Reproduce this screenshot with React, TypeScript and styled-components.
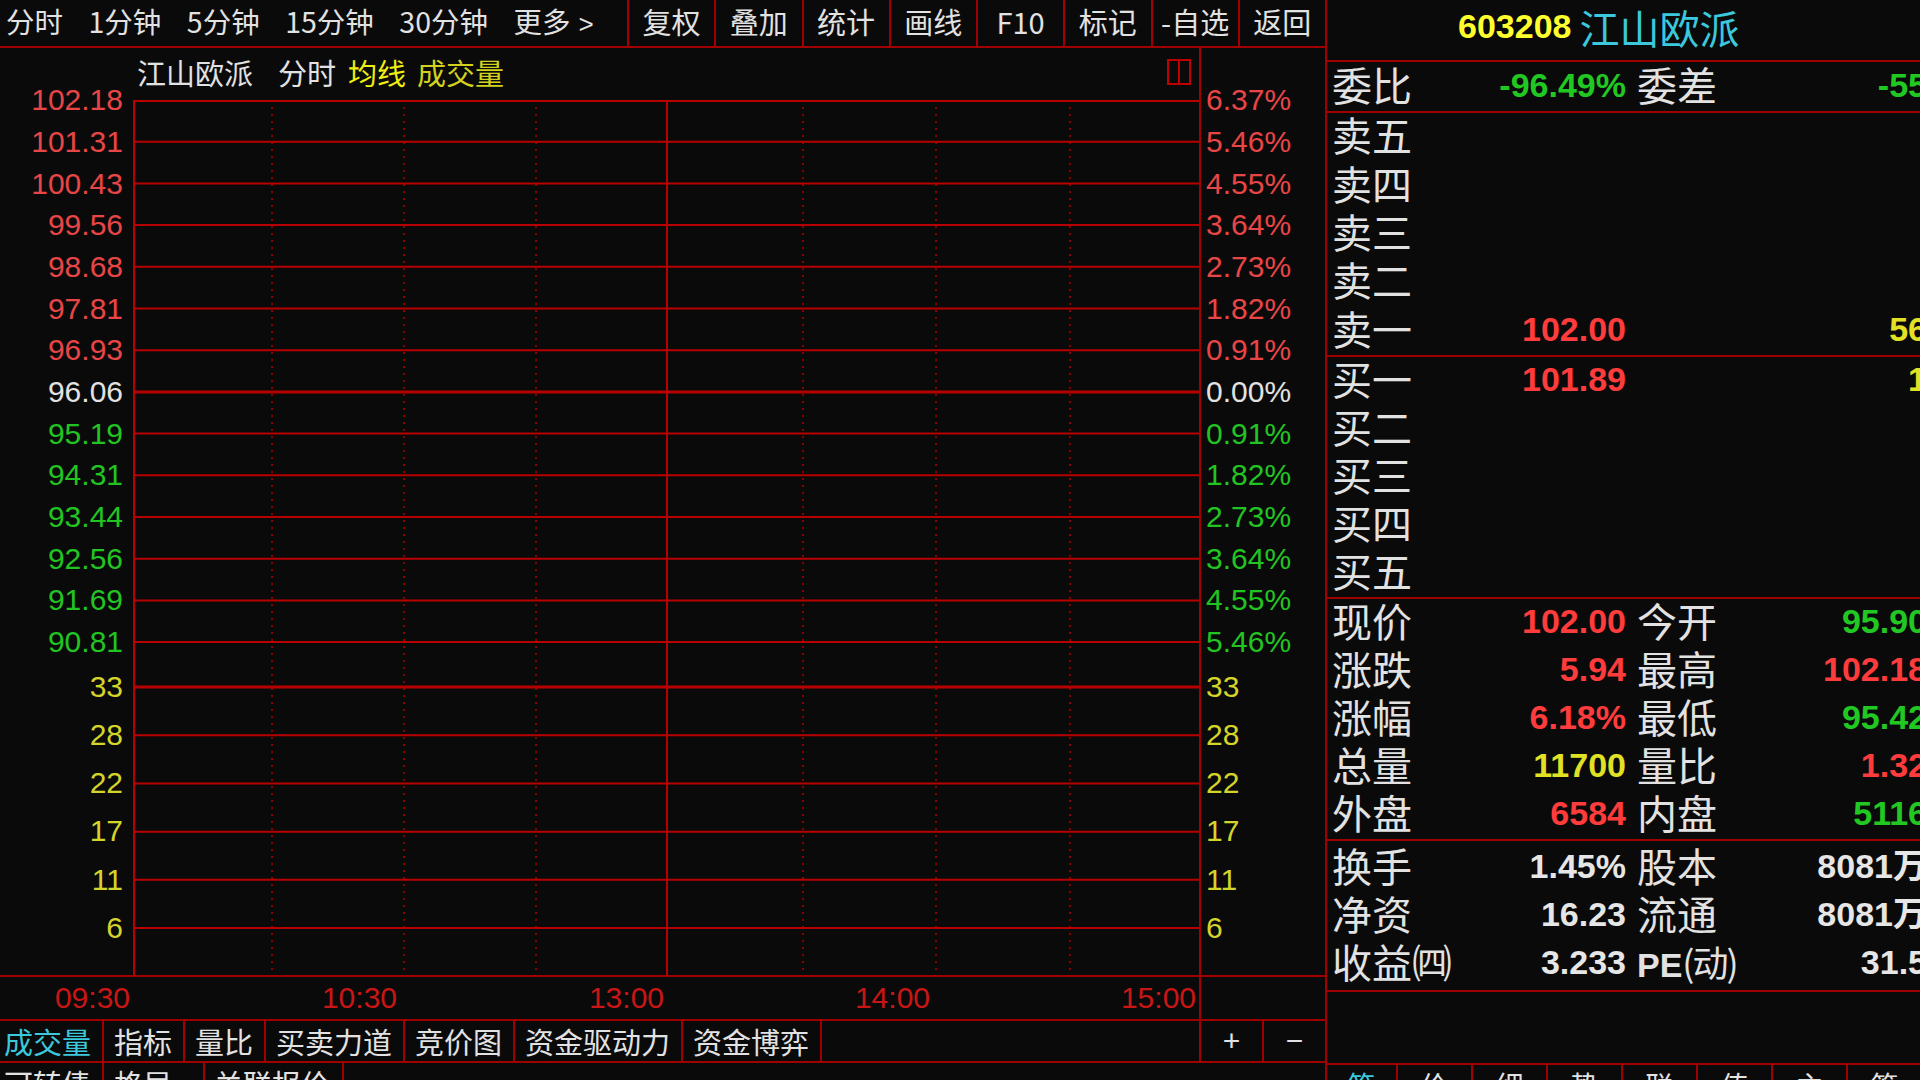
import React from 'react';
import styled, { createGlobalStyle } from 'styled-components';

const BG = '#0a0a0a';
const LINE = '#a00000';
const GRID = '#b80000';
const DOT = '#a80000';
const RED = '#e84646';
const GREEN = '#22c422';
const YELLOW = '#d4d42a';
const CYAN = '#3cc8dc';
const WHITE = '#e2e2e2';
const TIME_RED = '#c81616';

const TONES: Record<string, string> = {
  red: '#ff3c3c',
  green: '#22c822',
  yellow: '#e2e224',
  white: '#e6e6e6',
};

const CJK = `"Noto Sans CJK SC", "Noto Sans", sans-serif`;
const NUM = `"Liberation Sans", "Noto Sans CJK SC", Arial, sans-serif`;

const PRICE_STEP = 41.7;
const VOL_STEP = 48.2;
const VOL_START = PRICE_STEP * 14 - PRICE_STEP / 2 + VOL_STEP / 2;
const PLOT_W = 1066;
const PLOT_H = 875;

const Global = createGlobalStyle`
  html, body { margin: 0; padding: 0; background: ${BG}; overflow: hidden; }
  #root { width: 1920px; height: 1080px; overflow: hidden; }
  * { box-sizing: border-box; }
`;

const Screen = styled.div`
  display: flex;
  width: 1935px;
  height: 1080px;
  background: ${BG};
  color: ${WHITE};
  font-family: ${CJK};
  overflow: hidden;
`;

const LeftPanel = styled.div`
  flex: none;
  width: 1325px;
  display: flex;
  flex-direction: column;
`;

const Toolbar = styled.div`
  display: flex;
  height: 48px;
  flex: none;
  border-bottom: 2px solid ${LINE};
`;

const PeriodGroup = styled.div`
  width: 627px;
  display: flex;
  align-items: center;
  gap: 25.5px;
  padding: 0 0 5px 6px;
  font-size: 28.5px;
  white-space: nowrap;
`;

const Chev = styled.span`
  font-family: "Liberation Sans", sans-serif;
  font-size: 26px;
  margin-left: 8px;
`;

const ToolGroup = styled.div`
  flex: 1;
  display: grid;
  grid-template-columns: repeat(8, 1fr);
`;

const ToolButton = styled.div`
  border-left: 2px solid ${LINE};
  display: flex;
  align-items: center;
  justify-content: center;
  padding-bottom: 5px;
  font-size: 29px;
  white-space: nowrap;
`;

const ChartRegion = styled.div`
  flex: none;
  display: grid;
  grid-template-columns: 133px ${PLOT_W}px 126px;
  grid-template-rows: 52px ${PLOT_H}px;
  border-bottom: 2px solid ${LINE};
`;

const TitleBar = styled.div`
  grid-column: 1 / 3;
  grid-row: 1;
  display: flex;
  align-items: center;
  padding: 0 8px 5px 137px;
  font-size: 29px;
  white-space: nowrap;
`;

const TitleText = styled.span<{ $c: string; $ml: number }>`
  color: ${(p) => p.$c};
  margin-left: ${(p) => p.$ml}px;
`;

const Grow = styled.div`
  flex: 1;
`;

const LeftAxis = styled.div`
  grid-column: 1;
  grid-row: 2;
  display: flex;
  flex-direction: column;
  align-items: flex-end;
  padding-right: 10px;
  margin-top: -${PRICE_STEP / 2}px;
  font-family: ${NUM};
  font-size: 30px;
`;

const RightAxis = styled.div`
  grid-column: 3;
  grid-row: 1 / 3;
  border-left: 2px solid ${LINE};
  display: flex;
  flex-direction: column;
  align-items: flex-start;
  padding: ${52 - PRICE_STEP / 2}px 0 0 5px;
  font-family: ${NUM};
  font-size: 30px;
`;

const AxisLabel = styled.div<{ $vol?: boolean; $c: string }>`
  height: ${(p) => (p.$vol ? VOL_STEP : PRICE_STEP)}px;
  line-height: ${(p) => (p.$vol ? VOL_STEP : PRICE_STEP)}px;
  color: ${(p) => p.$c};
  white-space: nowrap;
`;

const Plot = styled.svg`
  grid-column: 2;
  grid-row: 2;
  display: block;
`;

const TimeRow = styled.div`
  flex: none;
  display: grid;
  grid-template-columns: 133px 267px 267px 266px 266px 126px;
  height: 44px;
  border-bottom: 2px solid ${LINE};
  font-family: ${NUM};
  font-size: 30px;
  color: ${TIME_RED};
`;

const TimeCell = styled.div<{ $edge?: boolean }>`
  text-align: right;
  padding-right: 3px;
  line-height: 42px;
  border-left: ${(p) => (p.$edge ? `2px solid ${LINE}` : 'none')};
`;

const TabRow = styled.div`
  flex: none;
  display: flex;
  height: 42px;
  border-bottom: 2px solid ${LINE};
  font-size: 29px;
  white-space: nowrap;
`;

const Tab = styled.div<{ $active?: boolean; $first?: boolean }>`
  padding: 0 10.5px 0 ${(p) => (p.$first ? 4 : 10.5)}px;
  border-right: 2px solid ${LINE};
  line-height: 40px;
  color: ${(p) => (p.$active ? CYAN : WHITE)};
`;

const ZoomCell = styled.div`
  width: 63px;
  border-left: 2px solid ${LINE};
  display: flex;
  align-items: center;
  justify-content: center;
  font-family: "Liberation Sans", sans-serif;
  font-size: 30px;
  color: ${WHITE};
`;

const SubTabRow = styled.div`
  flex: none;
  display: flex;
  height: 42px;
  font-size: 29px;
  white-space: nowrap;
`;

const SubTab = styled.div<{ $w: number; $pl: number }>`
  width: ${(p) => p.$w}px;
  padding-left: ${(p) => p.$pl}px;
  border-right: 2px solid ${LINE};
  line-height: 40px;
`;

const RightPanel = styled.div`
  flex: none;
  width: 610px;
  border-left: 2px solid ${LINE};
  display: flex;
  flex-direction: column;
`;

const Header = styled.div`
  flex: none;
  height: 62px;
  border-bottom: 2px solid ${LINE};
  display: flex;
  align-items: center;
  gap: 8px;
  padding: 0 0 7px 131px;
  white-space: nowrap;
`;

const Code = styled.span`
  font-family: ${NUM};
  font-weight: 700;
  font-size: 34px;
  color: #ffff2e;
`;

const Name = styled.span`
  font-size: 40px;
  color: ${CYAN};
`;

const Block = styled.div<{ $pt?: number; $h?: number }>`
  flex: none;
  border-bottom: 2px solid ${LINE};
  padding-top: ${(p) => p.$pt ?? 0}px;
  ${(p) => (p.$h ? `height: ${p.$h}px;` : '')}
`;

const Row = styled.div<{ $h: number }>`
  display: grid;
  grid-template-columns: 100px 194px 111px 190px;
  align-items: center;
  height: ${(p) => p.$h}px;
  padding-left: 5px;
`;

const Label = styled.div<{ $second?: boolean }>`
  font-size: 40px;
  line-height: 1;
  color: ${WHITE};
  white-space: nowrap;
  padding: 0 0 6px ${(p) => (p.$second ? 11 : 0)}px;
`;

const LatinBold = styled.span`
  font-family: ${NUM};
  font-weight: 700;
  font-size: 34px;
`;

const Paren = styled.span`
  font-size: 36px;
  letter-spacing: -2px;
`;

const Value = styled.div<{ $tone: string }>`
  font-family: ${NUM};
  font-weight: 700;
  font-size: 34px;
  line-height: 1;
  text-align: right;
  white-space: nowrap;
  padding-bottom: 3px;
  color: ${(p) => TONES[p.$tone]};
`;

const BottomTabs = styled.div`
  flex: none;
  display: flex;
  height: 42px;
  font-size: 28px;
`;

const BottomTab = styled.div<{ $w: number; $active?: boolean }>`
  width: ${(p) => p.$w}px;
  border-right: 2px solid ${LINE};
  text-align: center;
  line-height: 40px;
  color: ${(p) => (p.$active ? CYAN : WHITE)};
`;

const priceLabels: [string, string, string][] = [
  ['102.18', '6.37%', RED],
  ['101.31', '5.46%', RED],
  ['100.43', '4.55%', RED],
  ['99.56', '3.64%', RED],
  ['98.68', '2.73%', RED],
  ['97.81', '1.82%', RED],
  ['96.93', '0.91%', RED],
  ['96.06', '0.00%', WHITE],
  ['95.19', '0.91%', GREEN],
  ['94.31', '1.82%', GREEN],
  ['93.44', '2.73%', GREEN],
  ['92.56', '3.64%', GREEN],
  ['91.69', '4.55%', GREEN],
  ['90.81', '5.46%', GREEN],
];
const volLabels = ['33', '28', '22', '17', '11', '6'];

const vLines = [
  { x: 139, dashed: true },
  { x: 271, dashed: true },
  { x: 403, dashed: true },
  { x: 534, dashed: false },
  { x: 670, dashed: true },
  { x: 803, dashed: true },
  { x: 937, dashed: true },
];

const periods = ['分时', '1分钟', '5分钟', '15分钟', '30分钟'];
const tools = ['复权', '叠加', '统计', '画线', 'F10', '标记', '-自选', '返回'];
const tabs = ['成交量', '指标', '量比', '买卖力道', '竞价图', '资金驱动力', '资金博弈'];
const bottomTabs = ['笔', '价', '细', '势', '联', '值', '主', '筹'];

type Cell = { l: React.ReactNode; v: string; t: string };
type Pair = [Cell, Cell];

const sells = ['卖五', '卖四', '卖三', '卖二', '卖一'];
const buys = ['买一', '买二', '买三', '买四', '买五'];

const stats: Pair[] = [
  [{ l: '现价', v: '102.00', t: 'red' }, { l: '今开', v: '95.90', t: 'green' }],
  [{ l: '涨跌', v: '5.94', t: 'red' }, { l: '最高', v: '102.18', t: 'red' }],
  [{ l: '涨幅', v: '6.18%', t: 'red' }, { l: '最低', v: '95.42', t: 'green' }],
  [{ l: '总量', v: '11700', t: 'yellow' }, { l: '量比', v: '1.32', t: 'red' }],
  [{ l: '外盘', v: '6584', t: 'red' }, { l: '内盘', v: '5116', t: 'green' }],
];

const info: Pair[] = [
  [{ l: '换手', v: '1.45%', t: 'white' }, { l: '股本', v: '8081万', t: 'white' }],
  [{ l: '净资', v: '16.23', t: 'white' }, { l: '流通', v: '8081万', t: 'white' }],
  [
    { l: '收益㈣', v: '3.233', t: 'white' },
    {
      l: (
        <>
          <LatinBold>PE</LatinBold>
          <Paren>(动)</Paren>
        </>
      ),
      v: '31.5',
      t: 'white',
    },
  ],
];

function PairRow({ pair, h }: { pair: Pair; h: number }) {
  return (
    <Row $h={h}>
      <Label>{pair[0].l}</Label>
      <Value $tone={pair[0].t}>{pair[0].v}</Value>
      <Label $second>{pair[1].l}</Label>
      <Value $tone={pair[1].t}>{pair[1].v}</Value>
    </Row>
  );
}

function SplitIcon() {
  return (
    <svg width="24" height="26" viewBox="0 0 24 26">
      <rect x="1" y="1" width="22" height="24" fill="none" stroke="#c00000" strokeWidth="2" />
      <line x1="12" y1="1" x2="12" y2="25" stroke="#c00000" strokeWidth="2" />
    </svg>
  );
}

function ChartGrid() {
  const priceYs = priceLabels.map((_, i) => Math.max(1, i * PRICE_STEP));
  const volYs = volLabels.map((_, j) => VOL_START + j * VOL_STEP);
  return (
    <Plot width={PLOT_W} height={PLOT_H} viewBox={`0 0 ${PLOT_W} ${PLOT_H}`}>
      {vLines.map((l) => (
        <line
          key={l.x}
          x1={l.x}
          x2={l.x}
          y1={0}
          y2={PLOT_H}
          stroke={l.dashed ? DOT : GRID}
          strokeWidth={l.dashed ? 1.6 : 2}
          strokeDasharray={l.dashed ? '2 5' : undefined}
        />
      ))}
      {priceYs.map((y, i) => (
        <line key={`p${i}`} x1={0} x2={PLOT_W} y1={y} y2={y} stroke={GRID} strokeWidth={i === 7 ? 3 : 2} />
      ))}
      {volYs.map((y, j) => (
        <line key={`v${j}`} x1={0} x2={PLOT_W} y1={y} y2={y} stroke={GRID} strokeWidth={j === 0 ? 3 : 2} />
      ))}
      <line x1={1} x2={1} y1={0} y2={PLOT_H} stroke={GRID} strokeWidth={2} />
    </Plot>
  );
}

export default function App() {
  return (
    <>
      <Global />
      <Screen>
        <LeftPanel>
          <Toolbar>
            <PeriodGroup>
              {periods.map((p) => (
                <span key={p}>{p}</span>
              ))}
              <span>
                更多<Chev>&gt;</Chev>
              </span>
            </PeriodGroup>
            <ToolGroup>
              {tools.map((t) => (
                <ToolButton key={t}>{t}</ToolButton>
              ))}
            </ToolGroup>
          </Toolbar>

          <ChartRegion>
            <TitleBar>
              <TitleText $c={WHITE} $ml={0}>江山欧派</TitleText>
              <TitleText $c={WHITE} $ml={25}>分时</TitleText>
              <TitleText $c="#eeee10" $ml={12}>均线</TitleText>
              <TitleText $c="#d2d21e" $ml={11}>成交量</TitleText>
              <Grow />
              <SplitIcon />
            </TitleBar>
            <LeftAxis>
              {priceLabels.map(([p, , c], i) => (
                <AxisLabel key={`l${i}`} $c={c}>{p}</AxisLabel>
              ))}
              {volLabels.map((v) => (
                <AxisLabel key={`lv${v}`} $vol $c={YELLOW}>{v}</AxisLabel>
              ))}
            </LeftAxis>
            <ChartGrid />
            <RightAxis>
              {priceLabels.map(([, pct, c], i) => (
                <AxisLabel key={`r${i}`} $c={c}>{pct}</AxisLabel>
              ))}
              {volLabels.map((v) => (
                <AxisLabel key={`rv${v}`} $vol $c={YELLOW}>{v}</AxisLabel>
              ))}
            </RightAxis>
          </ChartRegion>

          <TimeRow>
            <TimeCell>09:30</TimeCell>
            <TimeCell>10:30</TimeCell>
            <TimeCell>13:00</TimeCell>
            <TimeCell>14:00</TimeCell>
            <TimeCell>15:00</TimeCell>
            <TimeCell $edge />
          </TimeRow>

          <TabRow>
            {tabs.map((t, i) => (
              <Tab key={t} $active={i === 0} $first={i === 0}>{t}</Tab>
            ))}
            <Grow />
            <ZoomCell>+</ZoomCell>
            <ZoomCell>−</ZoomCell>
          </TabRow>

          <SubTabRow>
            <SubTab $w={104} $pl={4}>可转债</SubTab>
            <SubTab $w={101} $pl={10}>格局</SubTab>
            <SubTab $w={139} $pl={9}>关联报价</SubTab>
          </SubTabRow>
        </LeftPanel>

        <RightPanel>
          <Header>
            <Code>603208</Code>
            <Name>江山欧派</Name>
          </Header>

          <Block>
            <PairRow h={49} pair={[{ l: '委比', v: '-96.49%', t: 'green' }, { l: '委差', v: '-55', t: 'green' }]} />
          </Block>

          <Block>
            {sells.map((s) => (
              <Row key={s} $h={48.4}>
                <Label>{s}</Label>
                <Value $tone="red">{s === '卖一' ? '102.00' : ''}</Value>
                <div />
                <Value $tone="yellow">{s === '卖一' ? '56' : ''}</Value>
              </Row>
            ))}
          </Block>

          <Block>
            {buys.map((b) => (
              <Row key={b} $h={48}>
                <Label>{b}</Label>
                <Value $tone="red">{b === '买一' ? '101.89' : ''}</Value>
                <div />
                <Value $tone="yellow">{b === '买一' ? '1' : ''}</Value>
              </Row>
            ))}
          </Block>

          <Block>
            {stats.map((p, i) => (
              <PairRow key={i} h={48} pair={p} />
            ))}
          </Block>

          <Block $pt={3} $h={151}>
            {info.map((p, i) => (
              <PairRow key={i} h={48} pair={p} />
            ))}
          </Block>

          <Block $h={73} />

          <BottomTabs>
            {bottomTabs.map((t, i) => (
              <BottomTab key={t} $w={i === 0 ? 71 : 75} $active={i === 0}>{t}</BottomTab>
            ))}
          </BottomTabs>
        </RightPanel>
      </Screen>
    </>
  );
}
